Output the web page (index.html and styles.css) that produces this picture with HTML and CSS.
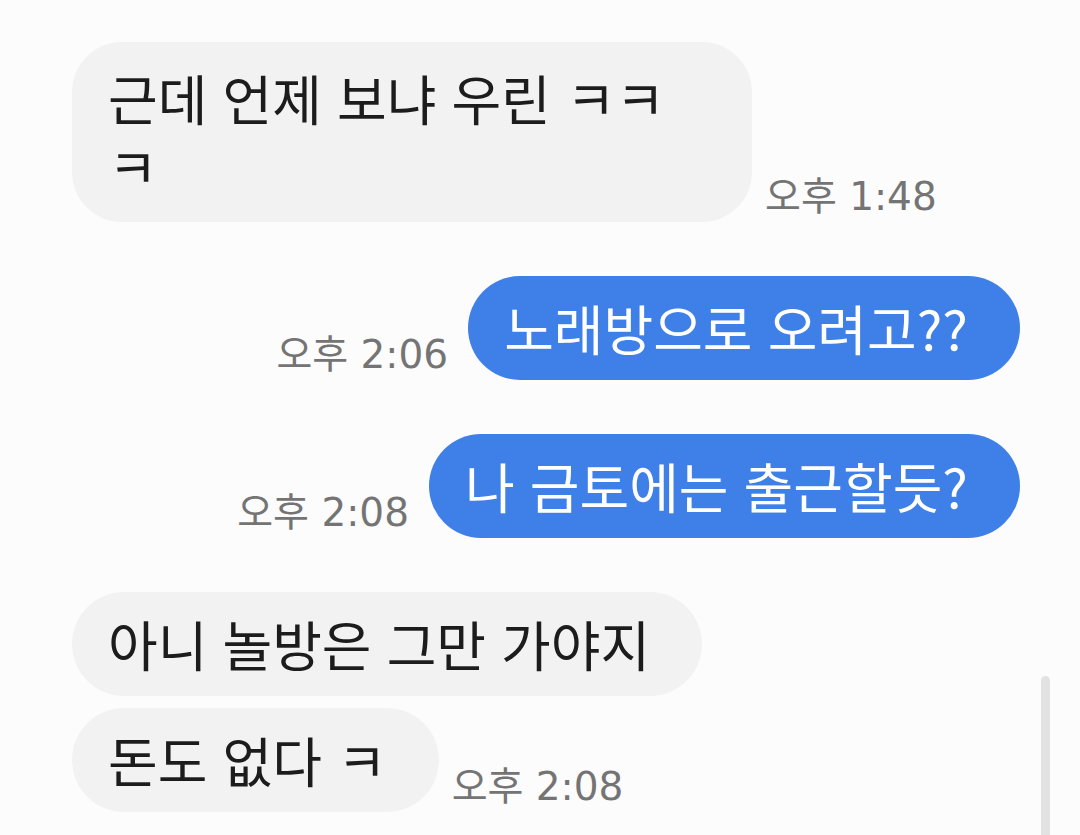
FILE: index.html
```html
<!DOCTYPE html>
<html lang="ko">

<head>
	<meta charset="utf-8">
	<title>채팅</title>
	<link rel="stylesheet" href="styles.css">
</head>

<body>
	<div class="chat">
		<div class="row in">
			<div class="bubble wrap">근데 언제 보냐 우린 ㅋㅋㅋ</div>
			<span class="time">오후 1:48</span>
		</div>

		<div class="row out">
			<span class="time">오후 2:06</span>
			<div class="bubble">노래방으로 오려고??</div>
		</div>

		<div class="row out">
			<span class="time">오후 2:08</span>
			<div class="bubble">나 금토에는 출근할듯?</div>
		</div>

		<div class="row in">
			<div class="bubble">아니 놀방은 그만 가야지</div>
		</div>

		<div class="row in tight">
			<div class="bubble">돈도 없다 ㅋ</div>
			<span class="time">오후 2:08</span>
		</div>
	</div>

	<div class="scrollbar"></div>
</body>

</html>
```

FILE: styles.css
```css
body {
	margin: 0;
	background: #fcfcfd;
	font-family: "Noto Sans CJK KR", "Noto Sans", sans-serif;
	overflow: hidden;
}

.chat {
	display: flex;
	flex-direction: column;
	padding: 42px 60px 0 72px;
	gap: 54px;
}

.row {
	display: flex;
	align-items: flex-end;
}

.row.out {
	justify-content: flex-end;
}

/* consecutive messages from the same person sit close together */
.row.tight {
	margin-top: -42px;
}

.bubble {
	font-size: 54px;
	line-height: 104px;
	padding: 0 52px 0 36px;
	border-radius: 52px;
	color: #1c1c1c;
	background: #f2f2f2;
	white-space: nowrap;
}

.bubble.wrap {
	white-space: normal;
	width: 592px;
	line-height: 68px;
	padding: 22px 52px 22px 36px;
	border-radius: 50px;
}

.out .bubble {
	background: #3e7fe8;
	color: #fff;
}

.time {
	font-family: "DejaVu Sans", "Noto Sans CJK KR", sans-serif;
	font-size: 39px;
	line-height: 1;
	color: #747474;
	margin-bottom: 6px;
	white-space: nowrap;
}

.in .time {
	margin-left: 13px;
}

.out .time {
	margin-right: 20px;
}

.scrollbar {
	position: absolute;
	left: 1041px;
	top: 676px;
	width: 9px;
	height: 170px;
	border-radius: 5px;
	background: #e2e2e2;
}
```
